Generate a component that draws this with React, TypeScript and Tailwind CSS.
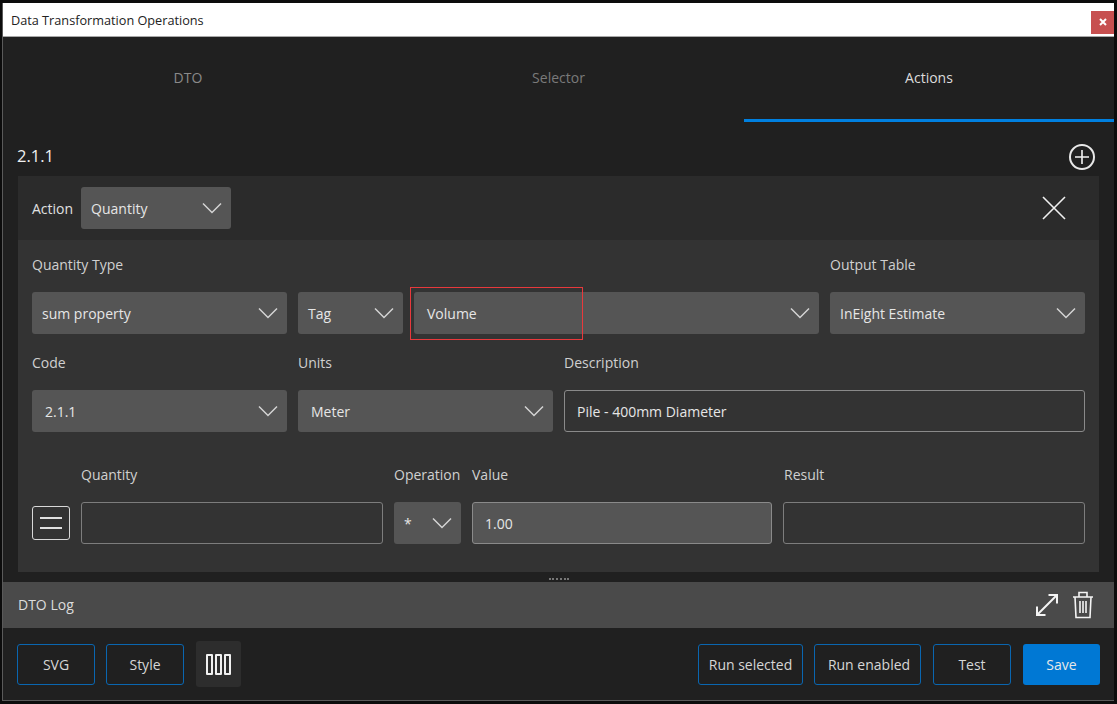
function Chevron() {
  return (
    <svg width="20" height="12" viewBox="0 0 20 12" fill="none" stroke="#d4d4d4" strokeWidth="1.5" className="shrink-0">
      <path d="M1 1.5 10 10.5 19 1.5" />
    </svg>
  );
}

function Select({ value, className, textClass }: { value: string; className: string; textClass?: string }) {
  return (
    <div className={`flex h-[42px] items-center justify-between rounded-[3px] bg-[#555555] pr-[9px] text-[#e6e6e6] ${textClass ?? 'pl-[10px]'} ${className}`}>
      <span>{value}</span>
      <Chevron />
    </div>
  );
}

function Outline({ label, className }: { label: string; className: string }) {
  return (
    <button className={`h-[41px] rounded-[3px] border border-[#0a66b0] bg-[#202020] text-[14px] text-[#d6d6d6] ${className}`}>
      {label}
    </button>
  );
}

export default function App() {
  return (
    <div className="h-[704px] w-[1117px] overflow-hidden bg-[#0c0c0c] pt-[3px] pl-[2px] pr-[3px] pb-[3px] font-['Open_Sans','Noto_Sans',sans-serif] text-[14px]">
      <div className="flex h-[698px] flex-col border-l border-b border-[#5a5a5a] bg-[#202020]">
        {/* Title bar */}
        <div className="flex h-[34px] items-center justify-between border-b border-[#a8a8a8] bg-white pl-[8px] text-[12.7px] text-[#222222]">
          <span className="pt-[3px]">Data Transformation Operations</span>
          <div className="mt-[5px] flex h-[23px] w-[23px] items-center justify-center bg-[#c75050]">
            <svg width="8" height="8" viewBox="0 0 8 8" stroke="#ffffff" strokeWidth="2">
              <path d="M1 1 7 7M7 1 1 7" />
            </svg>
          </div>
        </div>

        {/* Tabs */}
        <div className="flex h-[85px] text-[14px]">
          <div className="flex h-full w-[370px] items-center justify-center pb-[4px] text-[#8a8a8a]">DTO</div>
          <div className="flex h-full w-[371px] items-center justify-center pb-[4px] text-[#7a7a7a]">Selector</div>
          <div className="flex h-full flex-1 items-center justify-center border-b-[3px] border-[#0080e0] pb-[1px] text-[#dcdcdc]">Actions</div>
        </div>

        {/* Section heading */}
        <div className="flex h-[54px] items-center justify-between pt-[15px] pl-[14px] pr-[19px]">
          <span className="text-[16.5px] text-[#f0f0f0]">2.1.1</span>
          <div className="flex h-[26px] w-[26px] items-center justify-center rounded-full border-2 border-[#e8e8e8]">
            <svg width="14" height="14" viewBox="0 0 14 14" stroke="#f4f4f4" strokeWidth="1.6">
              <path d="M7 0V14M0 7H14" />
            </svg>
          </div>
        </div>

        {/* Action panel */}
        <div className="mx-[15px] w-[1081px] text-[#d0d0d0]">
          <div className="flex h-[64px] items-center justify-between bg-[#2b2b2b] pl-[14px] pr-[32px]">
            <div className="flex items-center gap-[8px]">
              <span className="text-[#e0e0e0]">Action</span>
              <Select value="Quantity" className="w-[150px]" />
            </div>
            <svg width="26" height="26" viewBox="0 0 26 26" stroke="#f0f0f0" strokeWidth="1.6">
              <path d="M2 2 24 24M24 2 2 24" />
            </svg>
          </div>

          <div className="relative h-[332px] bg-[#333333] px-[14px] pt-[13px]">
            <div className="flex h-[22px] items-center">
              <span className="w-[798px]">Quantity Type</span>
              <span>Output Table</span>
            </div>
            <div className="mt-[17px] flex gap-[11px]">
              <Select value="sum property" className="w-[255px]" />
              <Select value="Tag" className="w-[105px]" />
              <Select value="Volume" className="w-[405px]" textClass="pl-[13px]" />
              <Select value="InEight Estimate" className="w-[255px]" />
            </div>

            <div className="mt-[17px] flex h-[22px] items-center">
              <span className="w-[266px]">Code</span>
              <span className="w-[266px]">Units</span>
              <span>Description</span>
            </div>
            <div className="mt-[17px] flex gap-[11px]">
              <Select value="2.1.1" className="w-[255px]" textClass="pl-[13px]" />
              <Select value="Meter" className="w-[255px]" textClass="pl-[13px]" />
              <div className="flex h-[42px] w-[521px] items-center rounded-[3px] border border-[#8a8a8a] pl-[12px] text-[#e6e6e6]">
                Pile - 400mm Diameter
              </div>
            </div>

            <div className="mt-[31px] flex h-[22px] items-center">
              <span className="ml-[49px] w-[313px]">Quantity</span>
              <span className="w-[78px]">Operation</span>
              <span className="w-[312px]">Value</span>
              <span>Result</span>
            </div>
            <div className="mt-[17px] flex items-center gap-[11px]">
              <div className="flex h-[34px] w-[38px] flex-col items-center justify-center gap-[8px] rounded-[3px] border border-[#d8d8d8]">
                <div className="h-[2px] w-[22px] bg-[#e0e0e0]" />
                <div className="h-[2px] w-[22px] bg-[#e0e0e0]" />
              </div>
              <div className="h-[42px] w-[302px] rounded-[3px] border border-[#7d7d7d]" />
              <Select value="*" className="w-[67px]" />
              <div className="flex h-[42px] w-[300px] items-center rounded-[3px] border border-[#8a8a8a] bg-[#555555] pl-[12px] text-[#e6e6e6]">
                1.00
              </div>
              <div className="h-[42px] w-[302px] rounded-[3px] border border-[#7d7d7d]" />
            </div>

            {/* highlight drawn on the Volume field */}
            <div className="absolute left-[392px] top-[47px] h-[53px] w-[173px] border border-[#e8393c]" />
          </div>
        </div>

        {/* Splitter */}
        <div className="flex h-[10px] items-end justify-center pb-[2px]">
          <div className="h-[2px] w-[20px] border-t-2 border-dotted border-[#777777]" />
        </div>

        {/* Log bar */}
        <div className="flex h-[46px] items-center justify-between bg-[#4a4a4a] pb-[2px] pl-[15px] pr-[20px] text-[#dcdcdc]">
          <span>DTO Log</span>
          <div className="flex items-center gap-[13px] pt-[2px]">
            <svg width="24" height="24" viewBox="0 0 24 24" fill="none" stroke="#f4f4f4" strokeWidth="2">
              <path d="M2 22 22 2M13.5 2H22V10.5M2 13.5V22H10.5" />
            </svg>
            <svg width="22" height="28" viewBox="0 0 22 28" fill="none" stroke="#f4f4f4" strokeWidth="1.6">
              <path d="M1 6H21M7 6V1.5H15V6M3 6 4 26.5H18L19 6" />
              <path d="M8 10V22M11 10V22M14 10V22" />
            </svg>
          </div>
        </div>

        {/* Footer buttons */}
        <div className="flex flex-1 items-center justify-between px-[14px]">
          <div className="flex items-center gap-[11px]">
            <Outline label="SVG" className="w-[78px]" />
            <Outline label="Style" className="w-[78px]" />
            <div className="ml-[1px] flex h-[46px] w-[45px] items-center justify-center gap-[2px] rounded-[3px] bg-[#2d2d2d]">
              <div className="h-[21px] w-[7px] rounded-[1px] border-2 border-[#f0f0f0]" />
              <div className="h-[21px] w-[7px] rounded-[1px] border-2 border-[#f0f0f0]" />
              <div className="h-[21px] w-[7px] rounded-[1px] border-2 border-[#f0f0f0]" />
            </div>
          </div>
          <div className="flex items-center gap-[11px]">
            <Outline label="Run selected" className="w-[105px]" />
            <Outline label="Run enabled" className="w-[107px] pl-[3px]" />
            <Outline label="Test" className="ml-[1px] w-[78px]" />
            <button className="ml-[1px] h-[41px] w-[77px] rounded-[3px] bg-[#0078d4] text-[14px] text-[#e8e8e8]">Save</button>
          </div>
        </div>
      </div>
    </div>
  );
}
